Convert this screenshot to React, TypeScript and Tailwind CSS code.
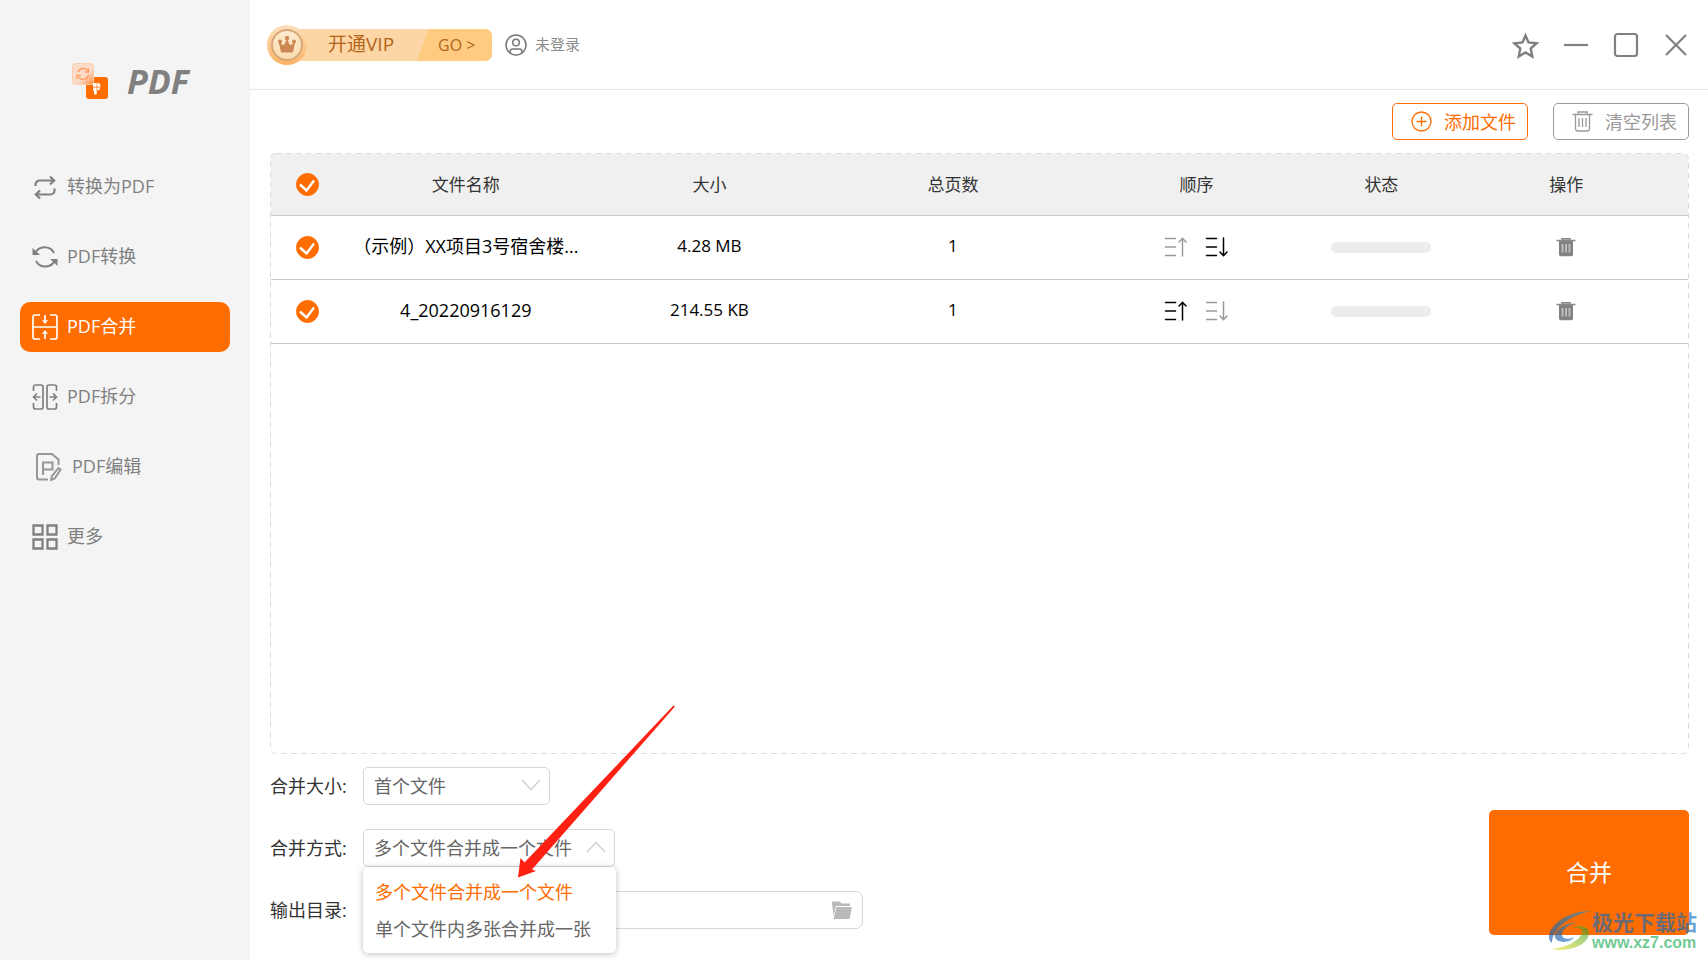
import { useState, type ReactNode } from "react";

const pages = [
  "转换为PDF",
  "PDF转换",
  "PDF合并",
  "PDF拆分",
  "PDF编辑",
  "更多",
];

const navIcons: ReactNode[] = [
  <svg key="0" viewBox="0 0 26 26" className="h-[26px] w-[26px]" fill="none" stroke="currentColor" strokeWidth="2.200">
    <path d="M3.500 12v-1.500a4 4 0 0 1 4-4H22M18 2.500l4.200 4L18 10.500M22.500 14.500v2a4 4 0 0 1-4 4H4M8 16.500l-4.200 4L8 24.500" />
  </svg>,
  <svg key="1" viewBox="0 0 26 26" className="h-[26px] w-[26px]" fill="none" stroke="currentColor" strokeWidth="2">
    <path d="M3 9.500A10.500 10.500 0 0 1 22 9M4 17a10.500 10.500 0 0 0 19-1" />
    <path d="M0.500 4v7h7.500zM25.500 22v-7H18z" fill="currentColor" stroke="none" />
  </svg>,
  <svg key="2" viewBox="0 0 26 26" className="h-[26px] w-[26px]" fill="none" stroke="currentColor" strokeWidth="1.700">
    <path d="M8 1H3a2 2 0 0 0-2 2v20a2 2 0 0 0 2 2h5M18 1h5a2 2 0 0 1 2 2v20a2 2 0 0 1-2 2h-5M1 13h24M13 1v7M13 25v-7" />
    <path d="M9.500 5.500L13 7l3.500-1.500L13 10zM9.500 20.500L13 19l3.500 1.500L13 16z" fill="currentColor" stroke="none" />
  </svg>,
  <svg key="3" viewBox="0 0 26 26" className="h-[26px] w-[26px]" fill="none" stroke="currentColor" strokeWidth="1.700">
    <path d="M1.500 7V3a2 2 0 0 1 2-2H9a2 2 0 0 1 2 2v20a2 2 0 0 1-2 2H3.500a2 2 0 0 1-2-2v-4M24.500 7V3a2 2 0 0 0-2-2H17a2 2 0 0 0-2 2v20a2 2 0 0 0 2 2h5.500a2 2 0 0 0 2-2v-4M8.500 13H2M5 9.500L1.500 13 5 16.500M17.500 13H24M21 9.500l3.500 3.500-3.500 3.500" />
  </svg>,
  <svg key="4" viewBox="0 0 26 28" className="h-7 w-[26px]" fill="none" stroke="currentColor" strokeWidth="2" opacity="0.8">
    <path d="M12 26.500H3a2 2 0 0 1-2-2V3a2 2 0 0 1 2-2h13l6.500 5.500V12M7 22V9.500h9.500v7H7" />
    <path d="M22.500 15l2.200 1.500-6 9-3.500 1.500.5-3.500z" />
  </svg>,
  <svg key="5" viewBox="0 0 26 26" className="h-[26px] w-[26px]" fill="none" stroke="currentColor" strokeWidth="2.300">
    <path d="M1.500 1.500h9v9h-9zM15.500 1.500h9v9h-9zM1.500 15.500h9v9h-9zM15.500 15.500h9v9h-9z" />
  </svg>,
];

const files = [
  { name: "（示例）XX项目3号宿舍楼...", size: "4.28 MB", pages: 1 },
  { name: "4_20220916129", size: "214.55 KB", pages: 1 },
];

const mergeModes = ["多个文件合并成一个文件", "单个文件内多张合并成一张"];

function Logo() {
  return (
    <svg viewBox="0 0 36 36" className="h-9 w-9" fill="none">
      <defs>
        <linearGradient id="logo-fade" x1="0" y1="0" x2="1" y2="1">
          <stop offset="0.6" stopColor="#fbdcc8" />
          <stop offset="1" stopColor="#ff8a35" />
        </linearGradient>
      </defs>
      <rect x="14" y="14" width="22" height="22" rx="3" fill="#ff6c00" />
      <rect x="0.500" y="0.500" width="21" height="21" rx="3" fill="url(#logo-fade)" stroke="#fbd0b0" />
      <path d="M6 9a5.500 5.500 0 0 1 9.500-1.500M16.500 12A5.500 5.500 0 0 1 7 14.500M16.500 5.500V9H13M5 16v-3.500h3.500" stroke="#ff9a5c" strokeWidth="1.400" />
      <path d="M21 20h3.700v3.700H21zM25.300 19.500a4 4 0 0 1 3.200 4.200h-3.200zM21 24.400h3.700V31L24 31.500h-2v-3.500l-1-1zM25.300 24.400h3.200a4 4 0 0 1-3.200 3z" fill="#fff" />
    </svg>
  );
}

function VipBanner() {
  return (
    <button type="button" aria-label="开通VIP" className="relative flex h-10 w-[225px] items-center text-[#b3641b]">
      <svg viewBox="0 0 225 40" className="absolute inset-0 h-10 w-[225px]" fill="none">
        <defs>
          <linearGradient id="vip-ring" x1="0" y1="0" x2="0" y2="1">
            <stop offset="0" stopColor="#fde0bd" />
            <stop offset="1" stopColor="#fbb265" />
          </linearGradient>
          <linearGradient id="vip-coin" x1="0" y1="0" x2="0" y2="1">
            <stop offset="0" stopColor="#fdebcf" />
            <stop offset="1" stopColor="#fbdcae" />
          </linearGradient>
        </defs>
        <path d="M20 4h198a7 7 0 0 1 7 7v18a7 7 0 0 1-7 7H20z" fill="#fdd6a5" />
        <path d="M162 4h56a7 7 0 0 1 7 7v18a7 7 0 0 1-7 7h-68z" fill="#fecb80" />
        <circle cx="20" cy="20" r="20" fill="url(#vip-ring)" />
        <circle cx="20" cy="20" r="15" fill="url(#vip-coin)" stroke="#d9a678" strokeWidth="2" />
        <path d="M14.500 27l-2-9 4.500 3 3-6 3 6 4.500-3-2 9z" fill="#cd8753" stroke="#cd8753" strokeLinejoin="round" />
        <circle cx="20" cy="13" r="2.200" fill="#cd8753" />
        <circle cx="13" cy="16.500" r="2" fill="#cd8753" />
        <circle cx="27" cy="16.500" r="2" fill="#cd8753" />
      </svg>
      <span className="relative ml-[61px] w-[110px] text-left text-[19px]">开通VIP</span>
      <span className="relative text-base">GO &gt;</span>
    </button>
  );
}

function Tick({ label }: { label: string }) {
  return (
    <label className="relative mx-auto block h-[23px] w-[23px]">
      <input type="checkbox" defaultChecked aria-label={label} className="peer block h-[23px] w-[23px] appearance-none rounded-full border border-[#ff6c00] checked:bg-[#ff6c00]" />
      <svg viewBox="0 0 23 23" className="pointer-events-none absolute inset-0 hidden h-[23px] w-[23px] peer-checked:block" fill="none" stroke="#fff" strokeWidth="2.400">
        <path d="M4 11.500l6.500 6 7.500-10" />
      </svg>
    </label>
  );
}

function OrderIcon({ up }: { up: boolean }) {
  return (
    <svg viewBox="0 0 24 20" className="h-5 w-6" fill="none" stroke="currentColor" strokeWidth="1.500" strokeLinecap="round">
      <path d="M1.500 1.500h10M1.500 10h10M1.500 18.500h10" />
      {up ? <path d="M18.500 19V1.500M15 5l3.500-3.700L22 5" /> : <path d="M18.500 1v17.500M15 15l3.500 3.700L22 15" />}
    </svg>
  );
}

function SmallBin() {
  return (
    <svg viewBox="0 0 20 19" className="h-[19px] w-5" fill="none">
      <path d="M0.500 2.500h19M6 2V.8h8V2" stroke="#8a8a8a" strokeWidth="1.500" />
      <path d="M3 3h14v13.500a1.800 1.800 0 0 1-1.800 1.800H4.800A1.800 1.800 0 0 1 3 16.500z" fill="#828282" />
      <path d="M6.500 6v8.500M10 6v8.500M13.500 6v8.500" stroke="#c4c4c4" strokeWidth="1.700" />
    </svg>
  );
}

function Chevron({ up = false }: { up?: boolean }) {
  return (
    <svg viewBox="0 0 20 12" className="pointer-events-none absolute top-3 right-[9px] h-3 w-5" fill="none" stroke="#cfcfcf" strokeWidth="1.300">
      <path d={up ? "M1 11l9-9.500L19 11" : "M1 1l9 9.500L19 1"} />
    </svg>
  );
}

function Watermark() {
  return (
    <div className="pointer-events-none absolute right-[-8px] bottom-[-17px] flex items-center opacity-60">
      <svg viewBox="0 0 44 42" className="h-[42px] w-11" fill="none">
        <defs>
          <linearGradient id="wm-green" x1="0" y1="1" x2="1" y2="0">
            <stop offset="0" stopColor="#f0e820" />
            <stop offset="1" stopColor="#2f9b3a" />
          </linearGradient>
          <linearGradient id="wm-blue" x1="0" y1="1" x2="1" y2="0">
            <stop offset="0" stopColor="#0b4ea8" />
            <stop offset="1" stopColor="#1c9ad6" />
          </linearGradient>
        </defs>
        <path d="M44 1C22 0 1 14 1 27c0 3 1 4.500 3 6C4 21 18 6 44 1z" fill="url(#wm-blue)" />
        <path d="M4 39c18 4 37-5 37-16 0-6-8-9-17-5 7-1 11 1 10 5-2 7-14 14-30 16z" fill="url(#wm-green)" />
        <path d="M29 12C16 13 6 21 7 27c1 6 15 7 19 0-5 3-12 2-12-2 0-5 6-10 15-13z" fill="url(#wm-blue)" />
      </svg>
      <div className="flex flex-col">
        <span className="text-[21px] leading-6 font-bold text-[#0a69be]">极光下载站</span>
        <span className="font-['Liberation_Sans'] text-base leading-[18px] font-bold text-[#0fa84c]">www.xz7.com</span>
      </div>
    </div>
  );
}

export default function App() {
  const [active, setActive] = useState(2);
  const [mode, setMode] = useState(0);

  return (
    <div className="flex min-h-screen bg-white font-['Open_Sans','Noto_Sans_CJK_SC',sans-serif] text-[#333]">
      <aside className="flex w-[250px] shrink-0 flex-col bg-[#f4f4f4] px-5 text-[#808080]">
        <div className="mt-[61px] ml-[52px] flex h-10 items-center gap-[19px]">
          <Logo />
          <span className="text-[34px] leading-10 font-bold italic">PDF</span>
        </div>
        <nav className="mt-[61px] flex flex-col gap-5">
          {pages.map((page, i) => (
            <button
              key={page}
              type="button"
              onClick={() => setActive(i)}
              className={
                "flex h-[50px] items-center rounded-[10px] text-left text-lg " +
                (i === 4 ? "gap-[10px] pl-4 " : "gap-[9px] pl-3 ") +
                (i === active ? "bg-[#ff6c00] text-white" : "")
              }
            >
              {navIcons[i]}
              <span className="pb-[2px]">{page}</span>
            </button>
          ))}
        </nav>
      </aside>

      <div className="flex min-w-0 flex-1 flex-col">
        <header className="flex h-[90px] shrink-0 items-center border-b border-[#e6e6e6] pr-[19px] pl-[17px] text-[#808080]">
          <VipBanner />
          <button type="button" className="ml-[13px] flex items-center gap-2 text-[15px] text-[#8c8c8c]">
            <svg viewBox="0 0 22 22" className="h-[22px] w-[22px]" fill="none" stroke="#777" strokeWidth="1.500">
              <circle cx="11" cy="11" r="10" />
              <circle cx="11" cy="8.500" r="3.300" />
              <path d="M5 18.500v-1a2.500 2.500 0 0 1 2.500-2.500h7a2.500 2.500 0 0 1 2.500 2.500v1" />
            </svg>
            <span>未登录</span>
          </button>
          <div className="ml-auto flex items-center gap-6">
            <button type="button" aria-label="收藏">
              <svg viewBox="0 0 28 28" className="h-7 w-7" fill="none" stroke="currentColor" strokeWidth="2.400">
                <path d="M14.500 4.500l3 7 8 .8-5.800 5.200 1.600 8-6.800-4-6.800 4 1.600-8-5.800-5.200 8-.8z" />
              </svg>
            </button>
            <button type="button" aria-label="最小化">
              <svg viewBox="0 0 26 26" className="h-[26px] w-[26px]" stroke="currentColor" strokeWidth="2.200">
                <path d="M1 13h24" />
              </svg>
            </button>
            <button type="button" aria-label="最大化">
              <svg viewBox="0 0 26 26" className="h-[26px] w-[26px]" fill="none" stroke="currentColor" strokeWidth="2.200">
                <rect x="2" y="2" width="22" height="22" rx="2.500" />
              </svg>
            </button>
            <button type="button" aria-label="关闭">
              <svg viewBox="0 0 26 26" className="h-[26px] w-[26px]" fill="none" stroke="currentColor" strokeWidth="2.200">
                <path d="M3 3l20 20M23 3L3 23" />
              </svg>
            </button>
          </div>
        </header>

        <main className="flex flex-1 flex-col pr-[19px] pb-[25px] pl-5">
          <div className="mt-[13px] flex justify-end gap-[25px]">
            <button type="button" className="flex h-[37px] w-[136px] items-center gap-3 rounded-[5px] border border-[#ff6c00] pl-[18px] text-lg text-[#ff6c00]">
              <svg viewBox="0 0 21 21" className="h-[21px] w-[21px]" fill="none" stroke="currentColor" strokeWidth="1.300">
                <circle cx="10.500" cy="10.500" r="9.500" />
                <path d="M5.500 10.500h10M10.500 5.500v10" />
              </svg>
              <span>添加文件</span>
            </button>
            <button type="button" className="flex h-[37px] w-[136px] items-center gap-3 rounded-[5px] border border-[#999] pl-[18px] text-lg text-[#999]">
              <svg viewBox="0 0 21 21" className="h-[21px] w-[21px]" fill="none" stroke="currentColor" strokeWidth="1.300">
                <path d="M0.500 3.500h20M6 3V1h9v2M3.500 3.500v14a2.500 2.500 0 0 0 2.500 2.500h9a2.500 2.500 0 0 0 2.500-2.500v-14M7 7v9M10.500 7v9M14 7v9" />
              </svg>
              <span>清空列表</span>
            </button>
          </div>

          <section className="relative mt-[13px] flex-1 px-px pt-px">
            <svg className="pointer-events-none absolute inset-0 h-full w-full" fill="none" stroke="#dcdcdc" strokeDasharray="6 4" aria-hidden="true">
              <rect x="0.500" y="0.500" rx="5" className="h-[calc(100%-1px)] w-[calc(100%-1px)]" />
            </svg>
            <table className="w-full table-fixed border-collapse text-center text-[17px] text-black">
              <colgroup>
                <col className="w-[73px]" />
                <col />
                <col />
                <col />
                <col />
                <col className="w-[126px]" />
                <col />
              </colgroup>
              <thead>
                <tr className="h-[61px] border-b border-[#c8c8c8] bg-[#f0f0f0] text-[#333]">
                  <th className="font-normal"><Tick label="全选" /></th>
                  <th className="font-normal">文件名称</th>
                  <th className="font-normal">大小</th>
                  <th className="font-normal">总页数</th>
                  <th className="font-normal">顺序</th>
                  <th className="font-normal">状态</th>
                  <th className="font-normal">操作</th>
                </tr>
              </thead>
              <tbody>
                {files.map((file, i) => (
                  <tr key={file.name} className="h-16 border-b border-[#c8c8c8]">
                    <td><Tick label={file.name} /></td>
                    <td className="pb-[2px] text-lg whitespace-nowrap">{file.name}</td>
                    <td className="pb-[2px]">{file.size}</td>
                    <td className="pb-[2px]">{file.pages}</td>
                    <td>
                      <div className="flex justify-center gap-[17px]">
                        <button type="button" aria-label="上移" className={i === 0 ? "text-[#999]" : "text-black"}>
                          <OrderIcon up />
                        </button>
                        <button type="button" aria-label="下移" className={i === files.length - 1 ? "text-[#999]" : "text-black"}>
                          <OrderIcon up={false} />
                        </button>
                      </div>
                    </td>
                    <td><div className="mx-auto h-[11px] w-[100px] rounded-[5px] bg-[#ededed]" /></td>
                    <td>
                      <button type="button" aria-label="删除" className="mx-auto block">
                        <SmallBin />
                      </button>
                    </td>
                  </tr>
                ))}
              </tbody>
            </table>
          </section>

          <div className="mt-[13px] flex items-end justify-between">
            <div className="flex flex-col gap-6 pb-[6px] text-lg">
              <div className="flex items-center">
                <label htmlFor="merge-size" className="w-[93px]">合并大小:</label>
                <div className="relative">
                  <select id="merge-size" className="block h-[38px] w-[187px] appearance-none rounded-[5px] border border-[#d6d6d6] bg-white pl-[10px] text-[#666]">
                    <option>首个文件</option>
                  </select>
                  <Chevron />
                </div>
              </div>
              <div className="flex items-center">
                <label htmlFor="merge-mode" className="w-[93px]">合并方式:</label>
                <div className="relative">
                  <select
                    id="merge-mode"
                    value={mode}
                    onChange={(e) => setMode(Number(e.target.value))}
                    className="block h-[38px] w-[252px] appearance-none rounded-[5px] border border-[#d6d6d6] bg-white pl-[10px] text-[#666]"
                  >
                    {mergeModes.map((m, i) => (
                      <option key={m} value={i}>{m}</option>
                    ))}
                  </select>
                  <Chevron up />
                  <ul className="absolute top-[38px] left-0 z-10 w-[253px] rounded-[5px] bg-white py-[6px] shadow-[0_1px_6px_rgba(0,0,0,0.25)]">
                    {mergeModes.map((m, i) => (
                      <li key={m}>
                        <button
                          type="button"
                          onClick={() => setMode(i)}
                          className={"block h-[37px] w-full pl-3 text-left whitespace-nowrap " + (i === mode ? "text-[#ff6c00]" : "text-[#666]")}
                        >
                          {m}
                        </button>
                      </li>
                    ))}
                  </ul>
                  <svg viewBox="0 0 160 175" className="pointer-events-none absolute top-[-124px] left-[153px] z-20 h-[175px] w-40" fill="#ff2014">
                    <path d="M157.500.500L159 1.500 16 164.500 20 166 2 172.500 4.500 153 8.500 157.500z" />
                  </svg>
                </div>
              </div>
              <div className="flex items-center">
                <label htmlFor="output-dir" className="w-[93px]">输出目录:</label>
                <div className="relative">
                  <input id="output-dir" type="text" className="block h-[38px] w-[500px] rounded-[7px] border border-[#d6d6d6] bg-white pr-10 pl-[10px] text-[#666]" />
                  <button type="button" aria-label="选择目录" className="absolute top-[10px] right-[11px]">
                    <svg viewBox="0 0 20 18" className="h-[18px] w-5" fill="#b9b9b9">
                      <path d="M0 1.500A1 1 0 0 1 1 .5h7l1.500 2H17a1 1 0 0 1 1 1V5H4L1.500 15z" />
                      <path d="M4.500 6H20l-2.500 12H1.500z" />
                    </svg>
                  </button>
                </div>
              </div>
            </div>
            <div className="relative">
              <button type="button" className="block h-[125px] w-[200px] rounded-[5px] bg-[#ff6c00] text-[23px] text-white">合并</button>
              <Watermark />
            </div>
          </div>
        </main>
      </div>
    </div>
  );
}
